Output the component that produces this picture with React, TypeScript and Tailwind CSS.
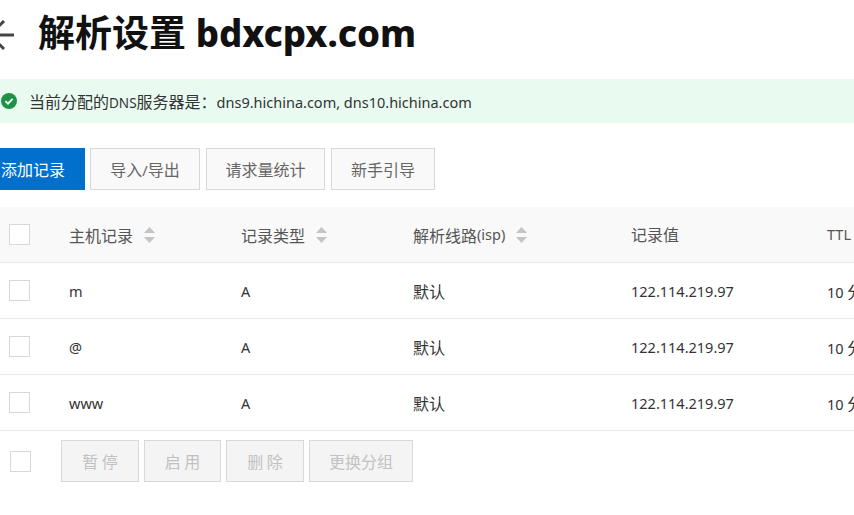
const FONT = "font-['Noto_Sans','Noto_Sans_CJK_SC',sans-serif]";
const CJK = "font-['Noto_Sans_CJK_SC',sans-serif] text-[16px]";

function Zh({ children }: { children: string }) {
  return <span className={CJK}>{children}</span>;
}

function Sort() {
  return (
    <svg width="11" height="16" viewBox="0 0 11 16" className="ml-[11px] shrink-0">
      <path d="M5.5 0 L11 6 H0 Z M0 10 H11 L5.5 16 Z" fill="#c4c4c4" />
    </svg>
  );
}

function Box() {
  return <div className="w-[21px] h-[21px] border border-[#d7d8d9] bg-white" />;
}

const GRID = "grid grid-cols-[69px_172px_172px_218px_196px_27px] items-center w-[854px] border-b border-[#e6eaee] text-[14.5px]";

function Row({ host, value }: { host: string; value: string }) {
  return (
    <div className={`${GRID} h-14 pt-[2px] text-[#333]`}>
      <div className="pl-[9px] -mt-[3px]"><Box /></div>
      <div>{host}</div>
      <div>A</div>
      <div><Zh>默认</Zh></div>
      <div>{value}</div>
      <div className="whitespace-nowrap">10 <Zh>分钟</Zh></div>
    </div>
  );
}

function Disabled({ w, label }: { w: string; label: string }) {
  return (
    <button className={`${w} ${CJK} h-[42px] border border-[#d7d8d9] bg-[#f4f4f4] text-[#c2c2c2]`}>{label}</button>
  );
}

function Tool({ w, children }: { w: string; children: React.ReactNode }) {
  return (
    <button className={`${w} h-[42px] border border-[#d7d8d9] bg-[#f9f9f9] text-[#666] text-[14.5px]`}>{children}</button>
  );
}

export default function App() {
  return (
    <div className={`${FONT} w-[854px] h-[515px] overflow-hidden bg-white`}>
      <div className="flex items-center h-[79px] pb-[10px]">
        <svg width="16" height="30" viewBox="0 0 16 30" className="shrink-0">
          <path d="M0 15 H14" fill="none" stroke="#444" strokeWidth="3" />
          <path d="M4 1 L-10 15 L4 29" fill="none" stroke="#444" strokeWidth="3" />
        </svg>
        <h1 className="ml-[22px] -mt-1 text-[37px] leading-none font-bold text-[#111] whitespace-nowrap">
          <span className="font-['Noto_Sans_CJK_SC',sans-serif]">解析设置</span> <span className="font-extrabold text-[36.6px]">bdxcpx.com</span>
        </h1>
      </div>

      <div className="flex items-center h-11 bg-[#e9fbf0] pl-px">
        <svg width="16" height="16" viewBox="0 0 16 16" className="shrink-0">
          <circle cx="8" cy="8" r="8" fill="#1f9345" />
          <path d="M4.4 8.2 L7 10.7 L11.6 5.8" fill="none" stroke="#fff" strokeWidth="1.8" />
        </svg>
        <span className="ml-3 text-[14.5px] text-[#333] whitespace-nowrap">
          <Zh>当前分配的</Zh><span className="text-[13.5px]">DNS</span><Zh>服务器是：</Zh>dns9.hichina.com, dns10.hichina.com
        </span>
      </div>

      <div className="flex mt-[25px] gap-[6px]">
        <button className={`${CJK} w-[85px] h-[42px] -mr-px pl-px bg-[#0070cc] text-white text-left`}>添加记录</button>
        <Tool w="w-[110px]"><Zh>导入</Zh>/<Zh>导出</Zh></Tool>
        <Tool w="w-[119px]"><Zh>请求量统计</Zh></Tool>
        <Tool w="w-[104px]"><Zh>新手引导</Zh></Tool>
      </div>

      <div className="mt-[17px]">
        <div className={`${GRID} h-14 bg-[#f9f9f9] text-[#555]`}>
          <div className="pl-[9px] -mt-[1px]"><Box /></div>
          <div className="flex items-center"><Zh>主机记录</Zh><Sort /></div>
          <div className="flex items-center"><Zh>记录类型</Zh><Sort /></div>
          <div className="flex items-center"><Zh>解析线路</Zh>(isp)<Sort /></div>
          <div><Zh>记录值</Zh></div>
          <div className="pt-px">TTL</div>
        </div>
        <Row host="m" value="122.114.219.97" />
        <Row host="@" value="122.114.219.97" />
        <Row host="www" value="122.114.219.97" />
      </div>

      <div className="flex items-center mt-[9px]">
        <div className="pl-[10px] w-[61px]"><Box /></div>
        <div className="flex gap-[5px]">
          <Disabled w="w-[78px]" label="暂 停" />
          <Disabled w="w-[77px]" label="启 用" />
          <Disabled w="w-[78px]" label="删 除" />
          <Disabled w="w-[104px]" label="更换分组" />
        </div>
      </div>
    </div>
  );
}
